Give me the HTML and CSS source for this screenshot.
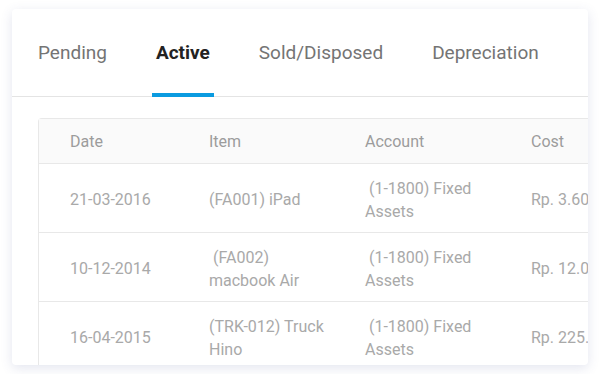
FILE: index.html
```html
<!DOCTYPE html>
<html lang="en">

<head>
    <meta charset="UTF-8">
    <meta name="viewport" content="width=device-width, initial-scale=1.0">
    <title>Fixed Assets</title>
    <link rel="stylesheet" href="styles.css">
</head>

<body>
    <main class="card">
        <nav class="tabs">
            <a class="tab">Pending</a>
            <a class="tab active">Active</a>
            <a class="tab">Sold/Disposed</a>
            <a class="tab">Depreciation</a>
        </nav>
        <div class="table-wrap">
            <table class="assets">
                <colgroup>
                    <col class="c-date">
                    <col class="c-item">
                    <col class="c-account">
                    <col class="c-cost">
                </colgroup>
                <thead>
                    <tr>
                        <th>Date</th>
                        <th>Item</th>
                        <th>Account</th>
                        <th>Cost</th>
                    </tr>
                </thead>
                <tbody>
                    <tr>
                        <td>21-03-2016</td>
                        <td>(FA001) iPad</td>
                        <td>&nbsp;(1-1800) Fixed<br>Assets</td>
                        <td>Rp. 3.600.000</td>
                    </tr>
                    <tr>
                        <td>10-12-2014</td>
                        <td>&nbsp;(FA002)<br>macbook Air</td>
                        <td>&nbsp;(1-1800) Fixed<br>Assets</td>
                        <td>Rp. 12.000.000</td>
                    </tr>
                    <tr>
                        <td>16-04-2015</td>
                        <td>(TRK-012) Truck<br>Hino</td>
                        <td>&nbsp;(1-1800) Fixed<br>Assets</td>
                        <td>Rp. 225.000.000</td>
                    </tr>
                </tbody>
            </table>
        </div>
    </main>
</body>

</html>
```

FILE: styles.css
```css
* {
    box-sizing: border-box;
}

body {
    margin: 0;
    background: #ffffff;
    font-family: Roboto, "Noto Sans", sans-serif;
}

.card {
    margin: 9px 12px;
    width: 576px;
    height: 356px;
    background: #ffffff;
    border-radius: 4px;
    box-shadow: 0 3px 12px rgba(70, 80, 150, 0.15);
    overflow: hidden;
}

.tabs {
    display: flex;
    gap: 41px;
    padding: 0 22px;
    height: 88px;
    border-bottom: 1px solid #e4e4e4;
}

.tab {
    display: flex;
    align-items: center;
    padding: 3px 4px 0;
    font-size: 19px;
    color: #747474;
    border-bottom: 4px solid transparent;
    margin-bottom: -1px;
}

.tab.active {
    color: #222222;
    font-weight: 700;
    border-bottom-color: #0a9be0;
}

.table-wrap {
    margin: 21px 0 0 26px;
    border: 1px solid #e8e8e8;
    border-right: 0;
    border-radius: 4px 0 0 0;
}

.assets {
    border-collapse: collapse;
    table-layout: fixed;
    width: 620px;
    font-size: 16px;
}

.c-date {
    width: 139px;
}

.c-item {
    width: 156px;
}

.c-account {
    width: 166px;
}

.c-cost {
    width: 160px;
}

.assets th {
    height: 44px;
    background: #fafafa;
    color: #9c9c9c;
    font-weight: 400;
    text-align: left;
    padding: 1px 0 0 31px;
    border-bottom: 1px solid #e8e8e8;
}

.assets td {
    height: 69px;
    padding: 4px 0 0 31px;
    color: #a9a9a9;
    line-height: 23px;
    white-space: nowrap;
    overflow: hidden;
    border-bottom: 1px solid #e8e8e8;
}
```
